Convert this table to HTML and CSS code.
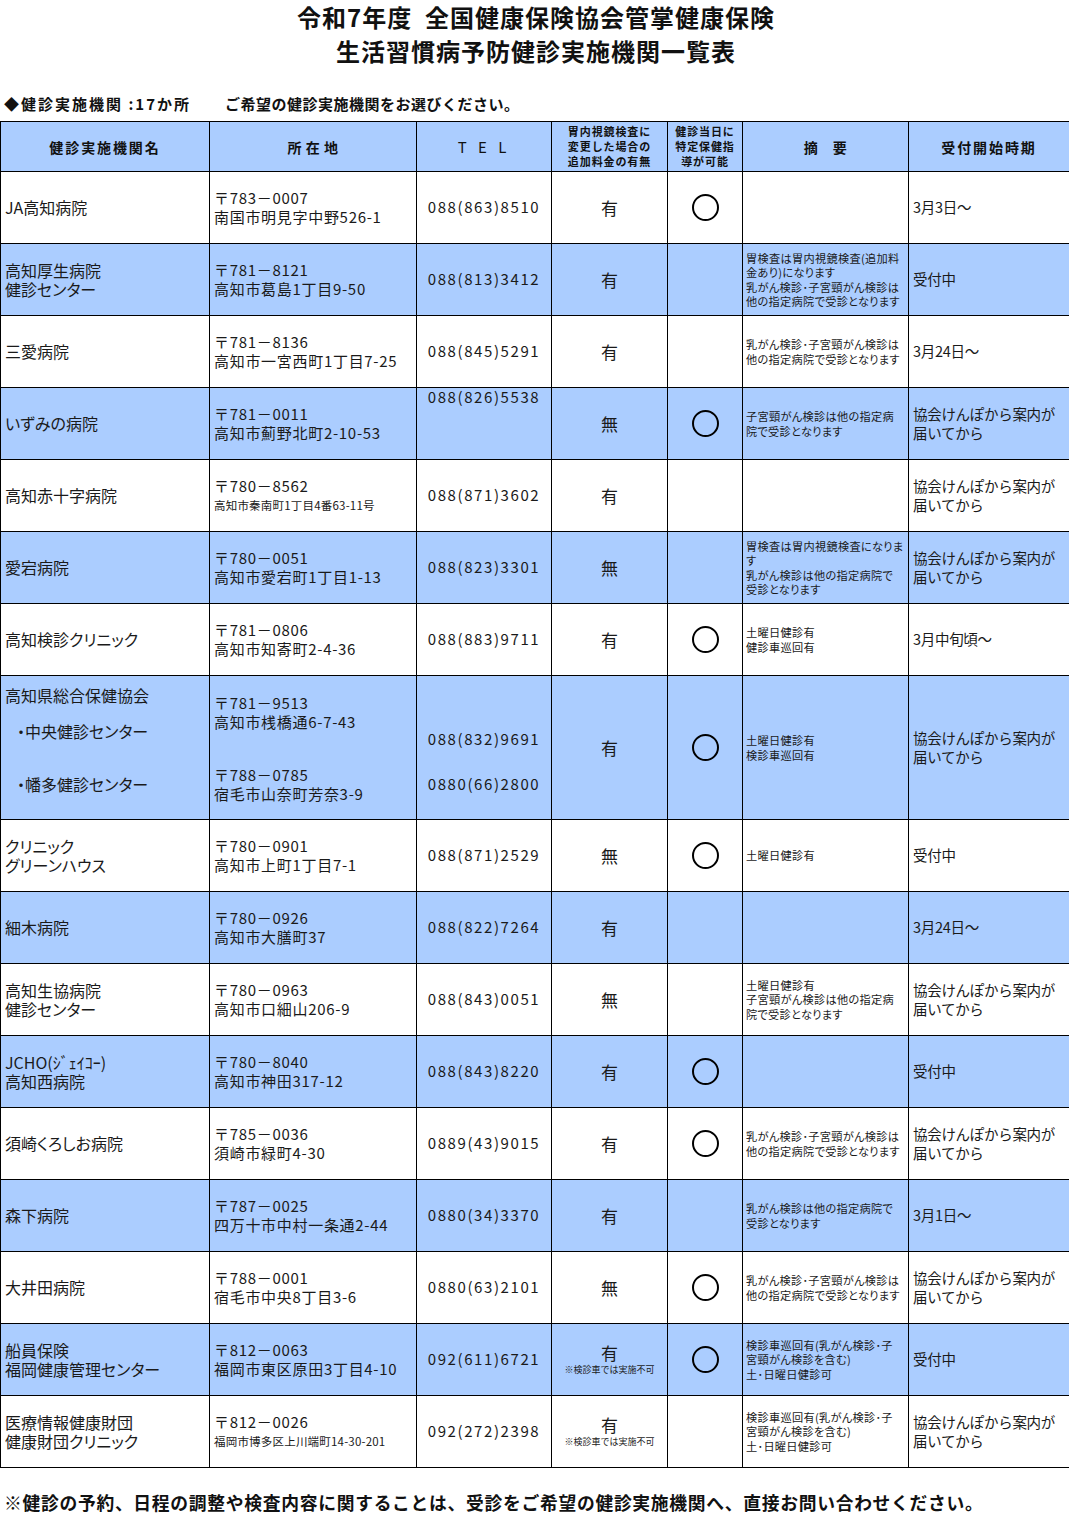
FILE: index.html
```html
<!DOCTYPE html>
<html lang="ja">
<head>
<meta charset="utf-8">
<title>生活習慣病予防健診実施機関一覧表</title>
<link rel="stylesheet" href="styles.css">
</head>
<body>
<header class="title">
  <h1 class="title-line">令和7年度&nbsp;&nbsp;全国健康保険協会管掌健康保険</h1>
  <h1 class="title-line">生活習慣病予防健診実施機関一覧表</h1>
</header>
<p class="lead"><span class="lead-count">◆健診実施機関 :17か所</span><span class="lead-msg">ご希望の健診実施機関をお選びください。</span></p>
<table class="list">
  <colgroup>
    <col class="c-name"><col class="c-addr"><col class="c-tel"><col class="c-fee"><col class="c-guide"><col class="c-note"><col class="c-start">
  </colgroup>
  <thead>
    <tr class="head">
      <th>健診実施機関名</th>
      <th class="th-tight">所 在 地</th>
      <th class="th-tel">T E L</th>
      <th class="th-small">胃内視鏡検査に<br>変更した場合の<br>追加料金の有無</th>
      <th class="th-small">健診当日に<br>特定保健指<br>導が可能</th>
      <th class="th-tight">摘　要</th>
      <th>受付開始時期</th>
    </tr>
  </thead>
  <tbody>
    <tr class="row">
      <td class="name">JA高知病院</td>
      <td class="addr">〒783－0007<br>南国市明見字中野526-1</td>
      <td class="tel">088(863)8510</td>
      <td class="fee">有</td>
      <td class="guide"><span class="ok"></span></td>
      <td class="note"></td>
      <td class="start">3月3日～</td>
    </tr>
    <tr class="row blue">
      <td class="name">高知厚生病院<br>健診センター</td>
      <td class="addr">〒781－8121<br>高知市葛島1丁目9-50</td>
      <td class="tel">088(813)3412</td>
      <td class="fee">有</td>
      <td class="guide"></td>
      <td class="note">胃検査は胃内視鏡検査(追加料<br>金あり)になります<br>乳がん検診･子宮頸がん検診は<br>他の指定病院で受診となります</td>
      <td class="start">受付中</td>
    </tr>
    <tr class="row">
      <td class="name">三愛病院</td>
      <td class="addr">〒781－8136<br>高知市一宮西町1丁目7-25</td>
      <td class="tel">088(845)5291</td>
      <td class="fee">有</td>
      <td class="guide"></td>
      <td class="note">乳がん検診･子宮頸がん検診は<br>他の指定病院で受診となります</td>
      <td class="start">3月24日～</td>
    </tr>
    <tr class="row blue">
      <td class="name">いずみの病院</td>
      <td class="addr">〒781－0011<br>高知市薊野北町2-10-53</td>
      <td class="tel tel-top">088(826)5538</td>
      <td class="fee">無</td>
      <td class="guide"><span class="ok"></span></td>
      <td class="note">子宮頸がん検診は他の指定病<br>院で受診となります</td>
      <td class="start">協会けんぽから案内が<br>届いてから</td>
    </tr>
    <tr class="row">
      <td class="name">高知赤十字病院</td>
      <td class="addr">〒780－8562<br><span class="addr-small">高知市秦南町1丁目4番63-11号</span></td>
      <td class="tel">088(871)3602</td>
      <td class="fee">有</td>
      <td class="guide"></td>
      <td class="note"></td>
      <td class="start">協会けんぽから案内が<br>届いてから</td>
    </tr>
    <tr class="row blue">
      <td class="name">愛宕病院</td>
      <td class="addr">〒780－0051<br>高知市愛宕町1丁目1-13</td>
      <td class="tel">088(823)3301</td>
      <td class="fee">無</td>
      <td class="guide"></td>
      <td class="note">胃検査は胃内視鏡検査になりま<br>す<br>乳がん検診は他の指定病院で<br>受診となります</td>
      <td class="start">協会けんぽから案内が<br>届いてから</td>
    </tr>
    <tr class="row">
      <td class="name">高知検診クリニック</td>
      <td class="addr">〒781－0806<br>高知市知寄町2-4-36</td>
      <td class="tel">088(883)9711</td>
      <td class="fee">有</td>
      <td class="guide"><span class="ok"></span></td>
      <td class="note">土曜日健診有<br>健診車巡回有</td>
      <td class="start">3月中旬頃～</td>
    </tr>
    <tr class="row row-double blue">
      <td class="name name-group">
        <div class="grp-head">高知県総合保健協会</div>
        <div class="grp-sub1">・中央健診センター</div>
        <div class="grp-sub2">・幡多健診センター</div>
      </td>
      <td class="addr addr-group">
        <div class="grp-addr1">〒781－9513<br>高知市桟橋通6-7-43</div>
        <div class="grp-addr2">〒788－0785<br>宿毛市山奈町芳奈3-9</div>
      </td>
      <td class="tel tel-group">
        <div class="grp-tel1">088(832)9691</div>
        <div class="grp-tel2">0880(66)2800</div>
      </td>
      <td class="fee">有</td>
      <td class="guide"><span class="ok"></span></td>
      <td class="note">土曜日健診有<br>検診車巡回有</td>
      <td class="start">協会けんぽから案内が<br>届いてから</td>
    </tr>
    <tr class="row">
      <td class="name">クリニック<br>グリーンハウス</td>
      <td class="addr">〒780－0901<br>高知市上町1丁目7-1</td>
      <td class="tel">088(871)2529</td>
      <td class="fee">無</td>
      <td class="guide"><span class="ok"></span></td>
      <td class="note">土曜日健診有</td>
      <td class="start">受付中</td>
    </tr>
    <tr class="row blue">
      <td class="name">細木病院</td>
      <td class="addr">〒780－0926<br>高知市大膳町37</td>
      <td class="tel">088(822)7264</td>
      <td class="fee">有</td>
      <td class="guide"></td>
      <td class="note"></td>
      <td class="start">3月24日～</td>
    </tr>
    <tr class="row">
      <td class="name">高知生協病院<br>健診センター</td>
      <td class="addr">〒780－0963<br>高知市口細山206-9</td>
      <td class="tel">088(843)0051</td>
      <td class="fee">無</td>
      <td class="guide"></td>
      <td class="note">土曜日健診有<br>子宮頸がん検診は他の指定病<br>院で受診となります</td>
      <td class="start">協会けんぽから案内が<br>届いてから</td>
    </tr>
    <tr class="row blue">
      <td class="name">JCHO(ｼﾞｪｲｺｰ)<br>高知西病院</td>
      <td class="addr">〒780－8040<br>高知市神田317-12</td>
      <td class="tel">088(843)8220</td>
      <td class="fee">有</td>
      <td class="guide"><span class="ok"></span></td>
      <td class="note"></td>
      <td class="start">受付中</td>
    </tr>
    <tr class="row">
      <td class="name">須崎くろしお病院</td>
      <td class="addr">〒785－0036<br>須崎市緑町4-30</td>
      <td class="tel">0889(43)9015</td>
      <td class="fee">有</td>
      <td class="guide"><span class="ok"></span></td>
      <td class="note">乳がん検診･子宮頸がん検診は<br>他の指定病院で受診となります</td>
      <td class="start">協会けんぽから案内が<br>届いてから</td>
    </tr>
    <tr class="row blue">
      <td class="name">森下病院</td>
      <td class="addr">〒787－0025<br>四万十市中村一条通2-44</td>
      <td class="tel">0880(34)3370</td>
      <td class="fee">有</td>
      <td class="guide"></td>
      <td class="note">乳がん検診は他の指定病院で<br>受診となります</td>
      <td class="start">3月1日～</td>
    </tr>
    <tr class="row">
      <td class="name">大井田病院</td>
      <td class="addr">〒788－0001<br>宿毛市中央8丁目3-6</td>
      <td class="tel">0880(63)2101</td>
      <td class="fee">無</td>
      <td class="guide"><span class="ok"></span></td>
      <td class="note">乳がん検診･子宮頸がん検診は<br>他の指定病院で受診となります</td>
      <td class="start">協会けんぽから案内が<br>届いてから</td>
    </tr>
    <tr class="row blue">
      <td class="name">船員保険<br>福岡健康管理センター</td>
      <td class="addr">〒812－0063<br>福岡市東区原田3丁目4-10</td>
      <td class="tel">092(611)6721</td>
      <td class="fee">有<span class="fee-note">※検診車では実施不可</span></td>
      <td class="guide"><span class="ok"></span></td>
      <td class="note">検診車巡回有(乳がん検診･子<br>宮頸がん検診を含む)<br>土･日曜日健診可</td>
      <td class="start">受付中</td>
    </tr>
    <tr class="row">
      <td class="name">医療情報健康財団<br>健康財団クリニック</td>
      <td class="addr">〒812－0026<br><span class="addr-small">福岡市博多区上川端町14-30-201</span></td>
      <td class="tel">092(272)2398</td>
      <td class="fee">有<span class="fee-note">※検診車では実施不可</span></td>
      <td class="guide"></td>
      <td class="note">検診車巡回有(乳がん検診･子<br>宮頸がん検診を含む)<br>土･日曜日健診可</td>
      <td class="start">協会けんぽから案内が<br>届いてから</td>
    </tr>
  </tbody>
</table>
<p class="foot">※健診の予約、日程の調整や検査内容に関することは、受診をご希望の健診実施機関へ、直接お問い合わせください。</p>
</body>
</html>
```
FILE: styles.css
```css
* { box-sizing: border-box; }
body {
  margin: 0;
  width: 1069px;
  font-family: "Noto Sans CJK JP", "Noto Sans", sans-serif;
  color: #1a1a1a;
  background: #fff;
}
.title {
  text-align: center;
}
.title-line {
  margin: 0;
  font-size: 24px;
  line-height: 34px;
  letter-spacing: 1px;
  font-weight: bold;
  color: #111;
  padding-left: 3px;
}
.lead {
  margin: 0;
  height: 121px;
  margin-top: -68px;
  padding: 94px 0 0 4px;
  font-size: 15px;
  line-height: 20px;
  font-weight: bold;
  color: #111;
  letter-spacing: 0.5px;
}
.lead-count { display: inline-block; width: 221px; letter-spacing: 2px; }
.list {
  border-collapse: collapse;
  table-layout: fixed;
  width: 1069px;
}
.c-name { width: 209px; }
.c-addr { width: 207px; }
.c-tel { width: 135px; }
.c-fee { width: 116px; }
.c-guide { width: 75px; }
.c-note { width: 166px; }
.c-start { width: 161px; }
.list th, .list td {
  border: 1px solid #000;
  padding: 0;
}
.head th {
  height: 50px;
  background: #abcdff;
  font-size: 14px;
  letter-spacing: 1.9px;
  font-weight: bold;
  color: #111;
  text-align: center;
  vertical-align: middle;
}
.head .th-tight { letter-spacing: 0.5px; }
.head .th-tel { letter-spacing: 4px; font-weight: normal; font-size: 15px; }
.head .th-small {
  font-size: 11px;
  line-height: 15px;
  letter-spacing: 0.9px;
}
.row td {
  height: 72px;
  vertical-align: middle;
  font-size: 15px;
  line-height: 18.5px;
}
.row.blue td { background: #abcdff; }
.row-double td { height: 144px; }
.name {
  padding-left: 4px !important;
  font-size: 16px !important;
  line-height: 19px !important;
  font-feature-settings: "palt";
}
.addr { padding-left: 4px !important; letter-spacing: 0.7px; }
.addr-small { font-size: 11.5px; letter-spacing: 0.2px; }
.tel { text-align: center; letter-spacing: 1.6px; }
.tel-top { vertical-align: top !important; padding-top: 0 !important; }
.fee { text-align: center; font-size: 17px !important; line-height: 18px !important; }
.fee-note {
  display: block;
  font-size: 9px;
  line-height: 12px;
  letter-spacing: 0;
  margin-top: 2px;
}
.guide { text-align: center; }
.ok {
  display: inline-block;
  width: 27px;
  height: 27px;
  border: 2px solid #000;
  border-radius: 50%;
  vertical-align: middle;
}
.note {
  padding-left: 3px !important;
  font-size: 11.2px !important;
  line-height: 14.5px !important;
  letter-spacing: 0.3px;
  white-space: nowrap;
  font-feature-settings: "palt";
}
.start { padding-left: 4px !important; font-size: 14.5px !important; letter-spacing: -0.3px; }

.name-group, .addr-group, .tel-group { vertical-align: top !important; }
.grp-head { margin-top: 10px; }
.grp-sub1 { margin-top: 17px; padding-left: 12px; }
.grp-sub2 { margin-top: 34px; padding-left: 12px; }
.grp-addr1 { margin-top: 18px; }
.grp-addr2 { margin-top: 35px; }
.grp-tel1 { margin-top: 54px; }
.grp-tel2 { margin-top: 26px; }

.foot {
  margin: 22px 0 0;
  padding-left: 4px;
  font-size: 17.8px;
  line-height: 24px;
  letter-spacing: 0.7px;
  font-weight: bold;
  color: #111;
}
```
